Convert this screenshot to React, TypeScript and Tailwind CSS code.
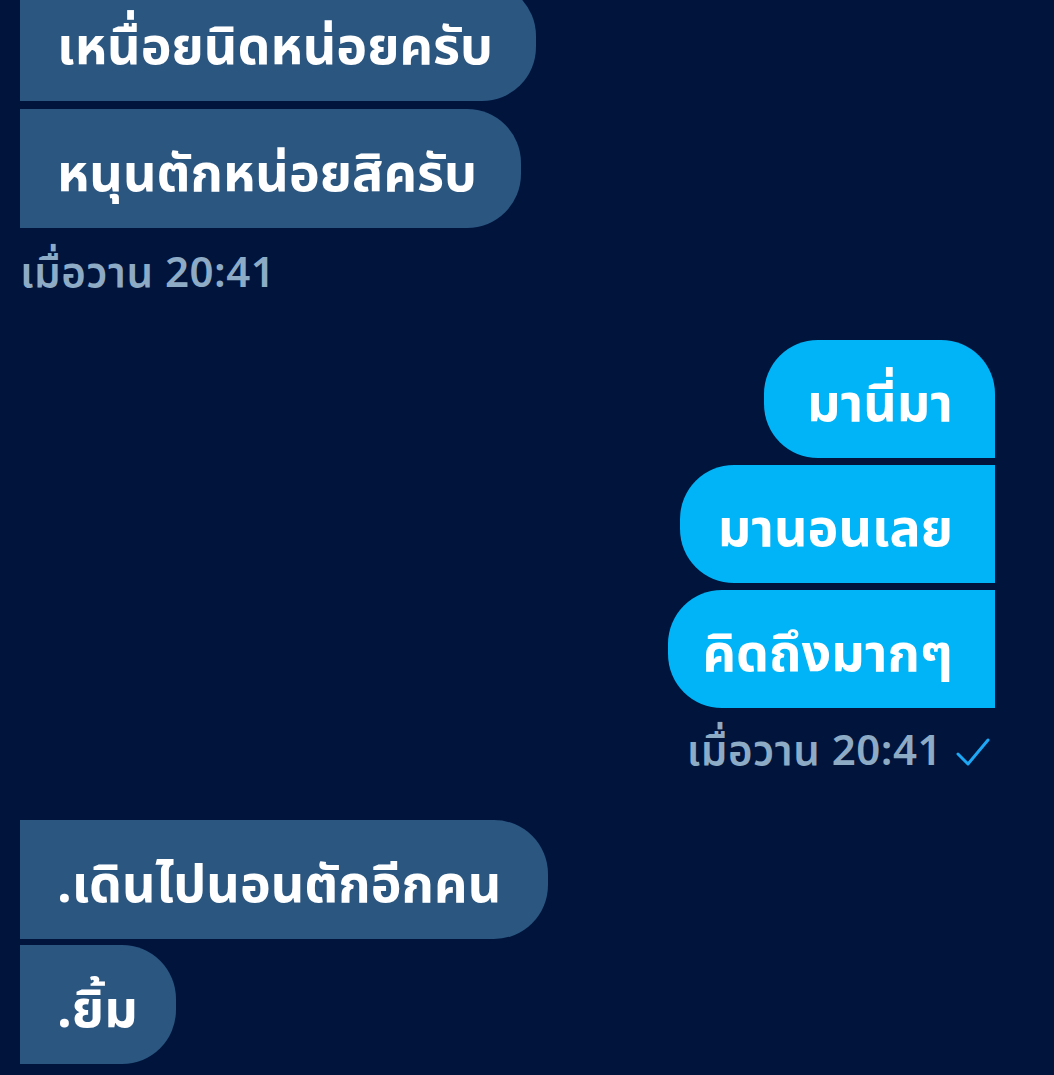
import React from "react";

const thai = { fontFamily: '"Noto Sans Thai", "Noto Sans", "Liberation Sans", sans-serif' };

const Received = ({ text, w, first }: { text: string; w: string; first?: boolean }) => (
  <div
    className={`${w} h-[119px] shrink-0 self-start bg-[#2b5680] rounded-r-[54px] flex items-center pl-[37px] pt-[12px] ${first ? "-mt-[18px]" : ""}`}
  >
    <span className="text-[52px] font-bold text-white leading-none whitespace-nowrap">{text}</span>
  </div>
);

const Sent = ({ text, w, top }: { text: string; w: string; top?: boolean }) => (
  <div
    className={`${w} h-[118px] shrink-0 self-end bg-[#00b4f7] rounded-l-[54px] flex items-center justify-end pr-[42px] pt-[12px] ${top ? "rounded-tr-[54px]" : ""}`}
  >
    <span className="text-[52px] font-bold text-white leading-none whitespace-nowrap">{text}</span>
  </div>
);

const Stamp = ({ read }: { read?: boolean }) => (
  <div className="flex items-center gap-[14px] text-[42px] font-semibold text-[#8eabc6] leading-none">
    <span className="tracking-[0.5px]">เมื่อวาน 20:41</span>
    {read && (
      <svg width="34" height="30" viewBox="0 0 34 30" fill="none">
        <polyline points="2,17 12,27 32,3" stroke="#1ea7f5" strokeWidth="3" strokeLinecap="round" strokeLinejoin="round" />
      </svg>
    )}
  </div>
);

export default function App() {
  return (
    <div className="w-[1054px] h-[1075px] overflow-hidden bg-[#01153c] flex flex-col pl-[20px] pr-[59px]" style={thai}>
      <Received text="เหนื่อยนิดหน่อยครับ" w="w-[516px]" first />
      <div className="h-[8px] shrink-0" />
      <Received text="หนุนตักหน่อยสิครับ" w="w-[501px]" />
      <div className="mt-[25px] self-start">
        <Stamp />
      </div>
      <div className="mt-[45px] flex flex-col gap-[7px]">
        <Sent text="มานี่มา" w="w-[231px]" top />
        <Sent text="มานอนเลย" w="w-[315px]" />
        <Sent text="คิดถึงมากๆ" w="w-[327px]" />
      </div>
      <div className="mt-[23px] self-end pr-[5px]">
        <Stamp read />
      </div>
      <div className="mt-[47px] flex flex-col gap-[6px]">
        <Received text=".เดินไปนอนตักอีกคน" w="w-[528px]" />
        <Received text=".ยิ้ม" w="w-[156px]" />
      </div>
    </div>
  );
}
